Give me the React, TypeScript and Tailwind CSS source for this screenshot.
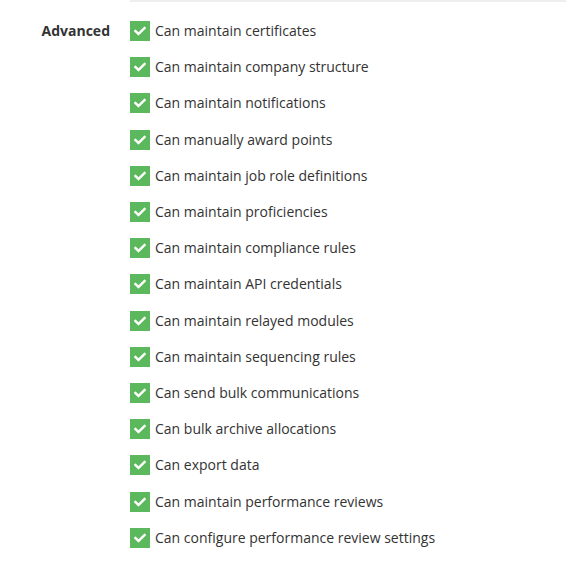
import { FaCheck } from "react-icons/fa";

const permissions = [
  "Can maintain certificates",
  "Can maintain company structure",
  "Can maintain notifications",
  "Can manually award points",
  "Can maintain job role definitions",
  "Can maintain proficiencies",
  "Can maintain compliance rules",
  "Can maintain API credentials",
  "Can maintain relayed modules",
  "Can maintain sequencing rules",
  "Can send bulk communications",
  "Can bulk archive allocations",
  "Can export data",
  "Can maintain performance reviews",
  "Can configure performance review settings",
];

export default function App() {
  return (
    <div
      className="w-[566px] h-[578px] bg-white text-[#333] text-[14px]"
      style={{ fontFamily: '"Open Sans", sans-serif' }}
    >
      <div className="ml-[130px] h-[2px] bg-[#eeeeee]" />
      <div className="flex pt-[11px]">
        <div className="w-[110px] text-right font-bold leading-[22px] pt-[7px]">
          Advanced
        </div>
        <div className="ml-[20px] flex flex-col">
          {permissions.map((p) => (
            <label key={p} className="flex items-center h-[36.2px]">
              <span className="w-[20px] h-[20px] bg-[#5cb85c] flex items-center justify-center">
                <FaCheck className="w-[12px] h-[12px] text-white" />
              </span>
              <span className="ml-[5px] leading-[20px]">{p}</span>
            </label>
          ))}
        </div>
      </div>
    </div>
  );
}
